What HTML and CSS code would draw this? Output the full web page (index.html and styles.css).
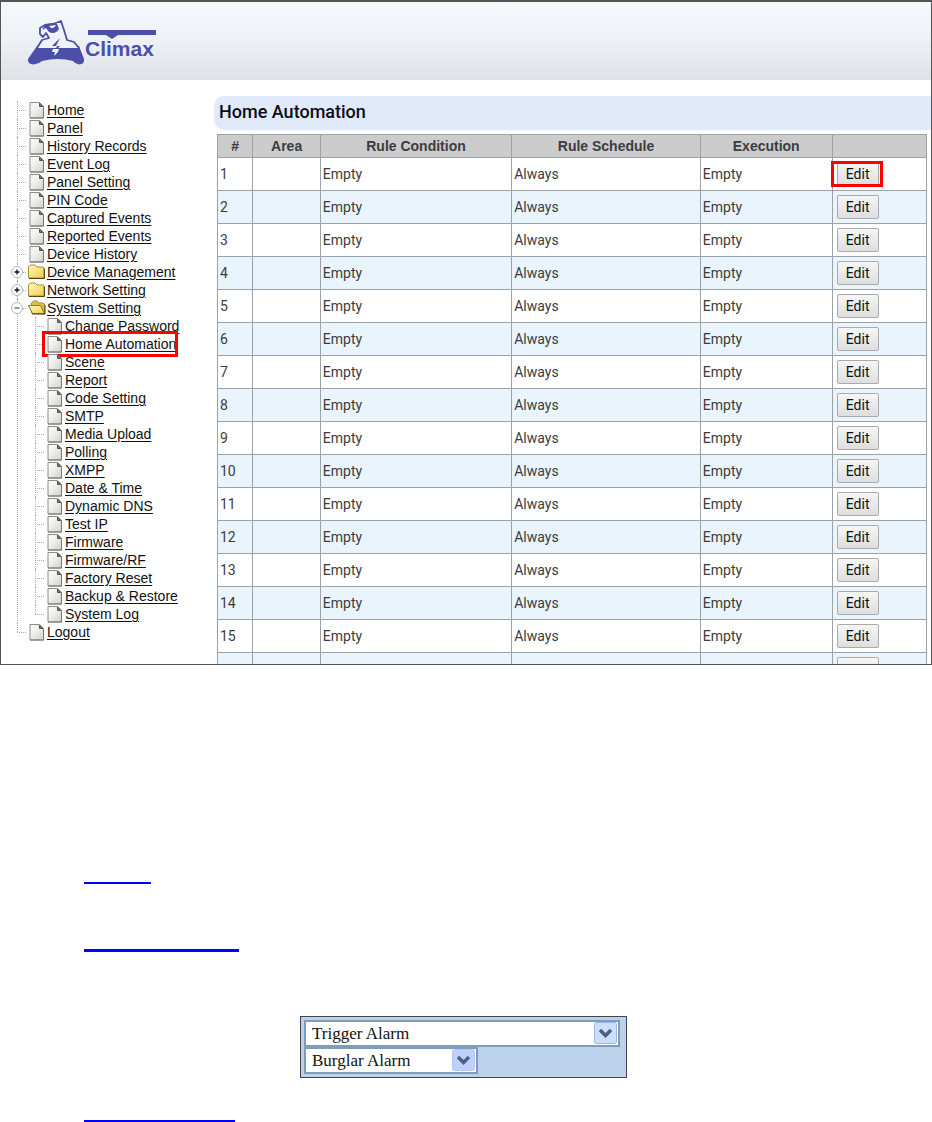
FILE: index.html
```html
<!DOCTYPE html>
<html lang="en">
<head>
<meta charset="utf-8">
<title>Home Automation</title>
<link rel="stylesheet" href="styles.css">
</head>
<body>
<svg class="defs" aria-hidden="true">
  <defs>
    <linearGradient id="paper" x1="0" y1="0" x2="1" y2="1"><stop offset="0.2" stop-color="#f8f8f4"/><stop offset="0.5" stop-color="#ecece8"/><stop offset="1" stop-color="#cfcfcd"/></linearGradient>
    <linearGradient id="gold" x1="0" y1="0" x2="1" y2="1"><stop offset="0" stop-color="#fffbb8"/><stop offset="1" stop-color="#eecb52"/></linearGradient>
    <symbol id="page" viewBox="0 0 18 18">
      <path d="M2 1.500h9.500l4 4v11.500h-13.500z" fill="url(#paper)" stroke="#8c8c8c"/>
      <path d="M2 17h13.500v-11" fill="none" stroke="#777"/>
      <path d="M11.500 2v3.500h3.500z" fill="#777" stroke="#555"/>
    </symbol>
    <symbol id="folder" viewBox="0 0 18 18">
      <path d="M.5 15v-11l2-2h4.500l2 2h6l1 1v10z" fill="url(#gold)" stroke="#a58d2d"/>
      <path d="M1 15.500h15.500v-10" fill="none" stroke="#54450c"/>
    </symbol>
    <symbol id="folder-open" viewBox="0 0 18 18">
      <path d="M3.500 14v-10l2-2h3.500l2 2h4.500l1 1v10z" fill="#dfbd4c" stroke="#a58d2d"/>
      <path d="M.5 6.500h12l4 8h-12z" fill="url(#gold)" stroke="#8c7a24"/>
      <path d="M4 15h13v-9" fill="none" stroke="#54450c"/>
    </symbol>
    <symbol id="plus" viewBox="0 0 14 14"><circle cx="7" cy="7" r="5.500" fill="#fff" stroke="#b5b5b5"/><path d="M4.500 7h5M7 4.500v5" stroke="#111" stroke-width="1.300"/></symbol>
    <symbol id="minus" viewBox="0 0 14 14"><circle cx="7" cy="7" r="5.500" fill="#fff" stroke="#b5b5b5"/><path d="M4.500 7h5" stroke="#333"/></symbol>
  </defs>
</svg>

<div class="frame">
  <header class="banner">
    <svg class="logo" viewBox="0 0 132 48" role="img" aria-label="Climax">
      <g fill="#4b4fa8">
        <path d="M10 28H52L57 41Q58 46 52 46.500Q48 46 46 43Q31 39 15 43Q12 46 7 46.500Q0 46 1 41L10 28Z"/>
        <path d="M10 30L15 22L22 20L19 15L16 19L13 16V10L18 7L26 6L34 3L37 12L40 22L47 24L52 30" fill="#f0f3f7" stroke="#4b4fa8" stroke-width="1.800" stroke-linejoin="round"/>
        <path d="M10 30H52V31H10Z"/>
        <path d="M18 7Q24 4 30 6L32 11Q28 17 22 14L19 10L15 12Z"/>
        <path d="M22 8Q26 13 29 7Z" fill="#f0f3f7"/>
        <path d="M33 20L25 28H30L28 33L33 28H29Z"/>
        <path d="M26 31H32L31 34L27 38L28 34H25Z" fill="#f0f3f7"/>
        <path d="M61 12H129V17H91L85 21L79 17H61Z"/>
        <text class="logo-text" x="58" y="38">Climax</text>
      </g>
    </svg>
  </header>
  <div class="columns">
    <nav class="sidebar" aria-label="Main menu">
      <ul class="tree">
        <li><div class="node"><svg><use href="#page"/></svg><a href="#">Home</a></div></li>
        <li><div class="node"><svg><use href="#page"/></svg><a href="#">Panel</a></div></li>
        <li><div class="node"><svg><use href="#page"/></svg><a href="#">History Records</a></div></li>
        <li><div class="node"><svg><use href="#page"/></svg><a href="#">Event Log</a></div></li>
        <li><div class="node"><svg><use href="#page"/></svg><a href="#">Panel Setting</a></div></li>
        <li><div class="node"><svg><use href="#page"/></svg><a href="#">PIN Code</a></div></li>
        <li><div class="node"><svg><use href="#page"/></svg><a href="#">Captured Events</a></div></li>
        <li><div class="node"><svg><use href="#page"/></svg><a href="#">Reported Events</a></div></li>
        <li><div class="node"><svg><use href="#page"/></svg><a href="#">Device History</a></div></li>
        <li><div class="node"><button class="toggle" aria-label="Expand"><svg><use href="#plus"/></svg></button><svg><use href="#folder"/></svg><a href="#">Device Management</a></div></li>
        <li><div class="node"><button class="toggle" aria-label="Expand"><svg><use href="#plus"/></svg></button><svg><use href="#folder"/></svg><a href="#">Network Setting</a></div></li>
        <li><div class="node"><button class="toggle" aria-label="Collapse"><svg><use href="#minus"/></svg></button><svg><use href="#folder-open"/></svg><a href="#">System Setting</a></div>
          <ul>
            <li><div class="node"><svg><use href="#page"/></svg><a href="#">Change Password</a></div></li>
            <li><div class="node marked"><svg><use href="#page"/></svg><a href="#">Home Automation</a></div></li>
            <li><div class="node"><svg><use href="#page"/></svg><a href="#">Scene</a></div></li>
            <li><div class="node"><svg><use href="#page"/></svg><a href="#">Report</a></div></li>
            <li><div class="node"><svg><use href="#page"/></svg><a href="#">Code Setting</a></div></li>
            <li><div class="node"><svg><use href="#page"/></svg><a href="#">SMTP</a></div></li>
            <li><div class="node"><svg><use href="#page"/></svg><a href="#">Media Upload</a></div></li>
            <li><div class="node"><svg><use href="#page"/></svg><a href="#">Polling</a></div></li>
            <li><div class="node"><svg><use href="#page"/></svg><a href="#">XMPP</a></div></li>
            <li><div class="node"><svg><use href="#page"/></svg><a href="#">Date &amp; Time</a></div></li>
            <li><div class="node"><svg><use href="#page"/></svg><a href="#">Dynamic DNS</a></div></li>
            <li><div class="node"><svg><use href="#page"/></svg><a href="#">Test IP</a></div></li>
            <li><div class="node"><svg><use href="#page"/></svg><a href="#">Firmware</a></div></li>
            <li><div class="node"><svg><use href="#page"/></svg><a href="#">Firmware/RF</a></div></li>
            <li><div class="node"><svg><use href="#page"/></svg><a href="#">Factory Reset</a></div></li>
            <li><div class="node"><svg><use href="#page"/></svg><a href="#">Backup &amp; Restore</a></div></li>
            <li><div class="node"><svg><use href="#page"/></svg><a href="#">System Log</a></div></li>
          </ul>
        </li>
        <li><div class="node"><svg><use href="#page"/></svg><a href="#">Logout</a></div></li>
      </ul>
    </nav>
    <main class="content">
      <h1>Home Automation</h1>
      <table class="rules">
        <colgroup><col class="c-num"><col class="c-area"><col class="c-cond"><col class="c-sched"><col class="c-exec"><col class="c-edit"></colgroup>
        <thead><tr><th>#</th><th>Area</th><th>Rule Condition</th><th>Rule Schedule</th><th>Execution</th><th></th></tr></thead>
        <tbody>
          <tr><td>1</td><td></td><td>Empty</td><td>Always</td><td>Empty</td><td><span class="marked"><button>Edit</button></span></td></tr>
          <tr><td>2</td><td></td><td>Empty</td><td>Always</td><td>Empty</td><td><button>Edit</button></td></tr>
          <tr><td>3</td><td></td><td>Empty</td><td>Always</td><td>Empty</td><td><button>Edit</button></td></tr>
          <tr><td>4</td><td></td><td>Empty</td><td>Always</td><td>Empty</td><td><button>Edit</button></td></tr>
          <tr><td>5</td><td></td><td>Empty</td><td>Always</td><td>Empty</td><td><button>Edit</button></td></tr>
          <tr><td>6</td><td></td><td>Empty</td><td>Always</td><td>Empty</td><td><button>Edit</button></td></tr>
          <tr><td>7</td><td></td><td>Empty</td><td>Always</td><td>Empty</td><td><button>Edit</button></td></tr>
          <tr><td>8</td><td></td><td>Empty</td><td>Always</td><td>Empty</td><td><button>Edit</button></td></tr>
          <tr><td>9</td><td></td><td>Empty</td><td>Always</td><td>Empty</td><td><button>Edit</button></td></tr>
          <tr><td>10</td><td></td><td>Empty</td><td>Always</td><td>Empty</td><td><button>Edit</button></td></tr>
          <tr><td>11</td><td></td><td>Empty</td><td>Always</td><td>Empty</td><td><button>Edit</button></td></tr>
          <tr><td>12</td><td></td><td>Empty</td><td>Always</td><td>Empty</td><td><button>Edit</button></td></tr>
          <tr><td>13</td><td></td><td>Empty</td><td>Always</td><td>Empty</td><td><button>Edit</button></td></tr>
          <tr><td>14</td><td></td><td>Empty</td><td>Always</td><td>Empty</td><td><button>Edit</button></td></tr>
          <tr><td>15</td><td></td><td>Empty</td><td>Always</td><td>Empty</td><td><button>Edit</button></td></tr>
          <tr><td></td><td></td><td></td><td></td><td></td><td><button aria-label="Edit"></button></td></tr>
        </tbody>
      </table>
    </main>
  </div>
</div>

<section class="notes">
  <a class="line short" href="#"></a>
  <a class="line long" href="#"></a>
  <div class="alarm">
    <select class="trigger" aria-label="Action"><option>Trigger Alarm</option></select>
    <select class="burglar" aria-label="Alarm type"><option>Burglar Alarm</option></select>
    <svg class="arrow arrow-trigger" viewBox="0 0 23 22" aria-hidden="true"><rect x=".5" y=".5" width="22" height="21" rx="2" fill="#c9e0fb" stroke="#9eb4e8"/><path d="M6 8l5.500 5.500L17 8" fill="none" stroke="#4a6185" stroke-width="3.500"/></svg>
    <svg class="arrow arrow-burglar" viewBox="0 0 23 22" aria-hidden="true"><rect x=".5" y=".5" width="22" height="21" rx="2" fill="#bfd0fa" stroke="#b4c6f5"/><path d="M6 8l5.500 5.500L17 8" fill="none" stroke="#4a6185" stroke-width="3.500"/></svg>
  </div>
  <a class="line medium" href="#"></a>
</section>
</body>
</html>
```
FILE: styles.css
```css
* { box-sizing: border-box; }
body { margin: 0; background: #fff; color: #222; font-family: "Liberation Sans", Arial, sans-serif; font-size: 14px; }
.defs { position: absolute; width: 0; height: 0; }
.frame { border: 1px solid #555; border-top-width: 2px; overflow: hidden; }

.banner { height: 78px; padding: 16px 0 0 26px; background: linear-gradient(#f6f9fc, #edf0f4 50%, #dee2e6); }
.logo { display: block; width: 132px; height: 48px; }
.logo-text { font-family: "Liberation Sans", Arial, sans-serif; font-weight: bold; font-size: 21px; }

.columns { display: grid; grid-template-columns: 213px minmax(0, 1fr); }
.sidebar { padding: 21px 0 23px 16px; }
.tree, .tree ul { margin: 0; padding: 0; list-style: none; }
.tree ul { margin-left: 18px; }
.tree li { position: relative; }
.tree li::before { content: ""; position: absolute; left: 0; top: 0; bottom: 0; border-left: 1px dotted #aaa; }
.tree li:last-child::before { bottom: auto; height: 9px; }
.node { position: relative; display: flex; align-items: center; height: 18px; padding-left: 11px; gap: 1px; line-height: 18px; white-space: nowrap; }
.node::before { content: ""; position: absolute; left: 0; top: 9px; width: 9px; border-top: 1px dotted #aaa; }
.node > svg { width: 18px; height: 18px; flex: none; }
.node a { color: #111; text-decoration: underline; text-underline-offset: 2px; }
.toggle { position: absolute; left: -7px; top: 2px; width: 14px; height: 14px; padding: 0; border: 0; background: none; }
.toggle svg { display: block; width: 14px; height: 14px; }
.marked { position: relative; }
.marked::after { content: ""; position: absolute; border: 3px solid #f00; pointer-events: none; }
.node.marked::after { left: 7px; right: 36px; top: -4px; bottom: -4px; }

.content { height: 0; min-height: 100%; overflow: hidden; padding-top: 16px; }
h1 { margin: 0; padding: 0 5px; height: 34px; border-radius: 10px 0 0 10px; background: #e0eafb; color: #0c0c14; font: 500 18px/31px Roboto, sans-serif; }
.rules { width: calc(100% - 7px); margin: 4px 4px 0 3px; border-collapse: collapse; table-layout: fixed; font: 14px/20px Roboto, sans-serif; color: #3c3c3c; }
.rules th, .rules td { border: 1px solid #9aa3a8; padding: 0 2px; height: 33px; text-align: left; }
.rules th { height: 23px; padding: 0; background: #ccc; text-align: center; font-family: "Liberation Sans", Arial, sans-serif; font-weight: 700; }
.rules tbody tr:nth-child(even) { background: #eaf4fc; }
.rules td:last-child { padding-left: 4px; }
.c-num { width: 5%; }
.c-area { width: 9.500%; }
.c-cond { width: 27%; }
.c-sched { width: 26.600%; }
.c-exec { width: 18.600%; }
.rules button { display: block; width: 42px; height: 24px; padding: 0; border: 1px solid #aaa; border-radius: 2px; background: linear-gradient(#f6f6f6, #dedede); color: #111; font: 14px/20px Roboto, sans-serif; }
span.marked { display: inline-block; vertical-align: middle; }
span.marked::after { left: -6px; right: -4px; top: -1px; bottom: -1px; }

.notes { display: flex; flex-direction: column; padding: 217px 84px 0; }
.line { border-bottom: 2px solid #00f; }
.short { width: 67px; }
.long { width: 155px; margin-top: 65px; border-bottom-width: 3px; }
.medium { width: 151px; margin-top: 42px; }
.alarm { position: relative; align-self: center; width: 327px; margin: 64px 5px 0 0; padding: 3px; border: 1px solid #444; background: #bcd2ea; }
.alarm select { display: block; appearance: none; height: 27px; padding: 0 6px; border: 2px solid #7f9db9; border-radius: 0; background: #fff; color: #111; font: 17px/22px "Liberation Serif", "Times New Roman", serif; }
.trigger { width: 316px; }
.burglar { width: 174px; }
.arrow { position: absolute; width: 23px; height: 22px; pointer-events: none; }
.arrow-trigger { right: 9px; top: 5px; }
.arrow-burglar { left: 151px; top: 32px; }
```
